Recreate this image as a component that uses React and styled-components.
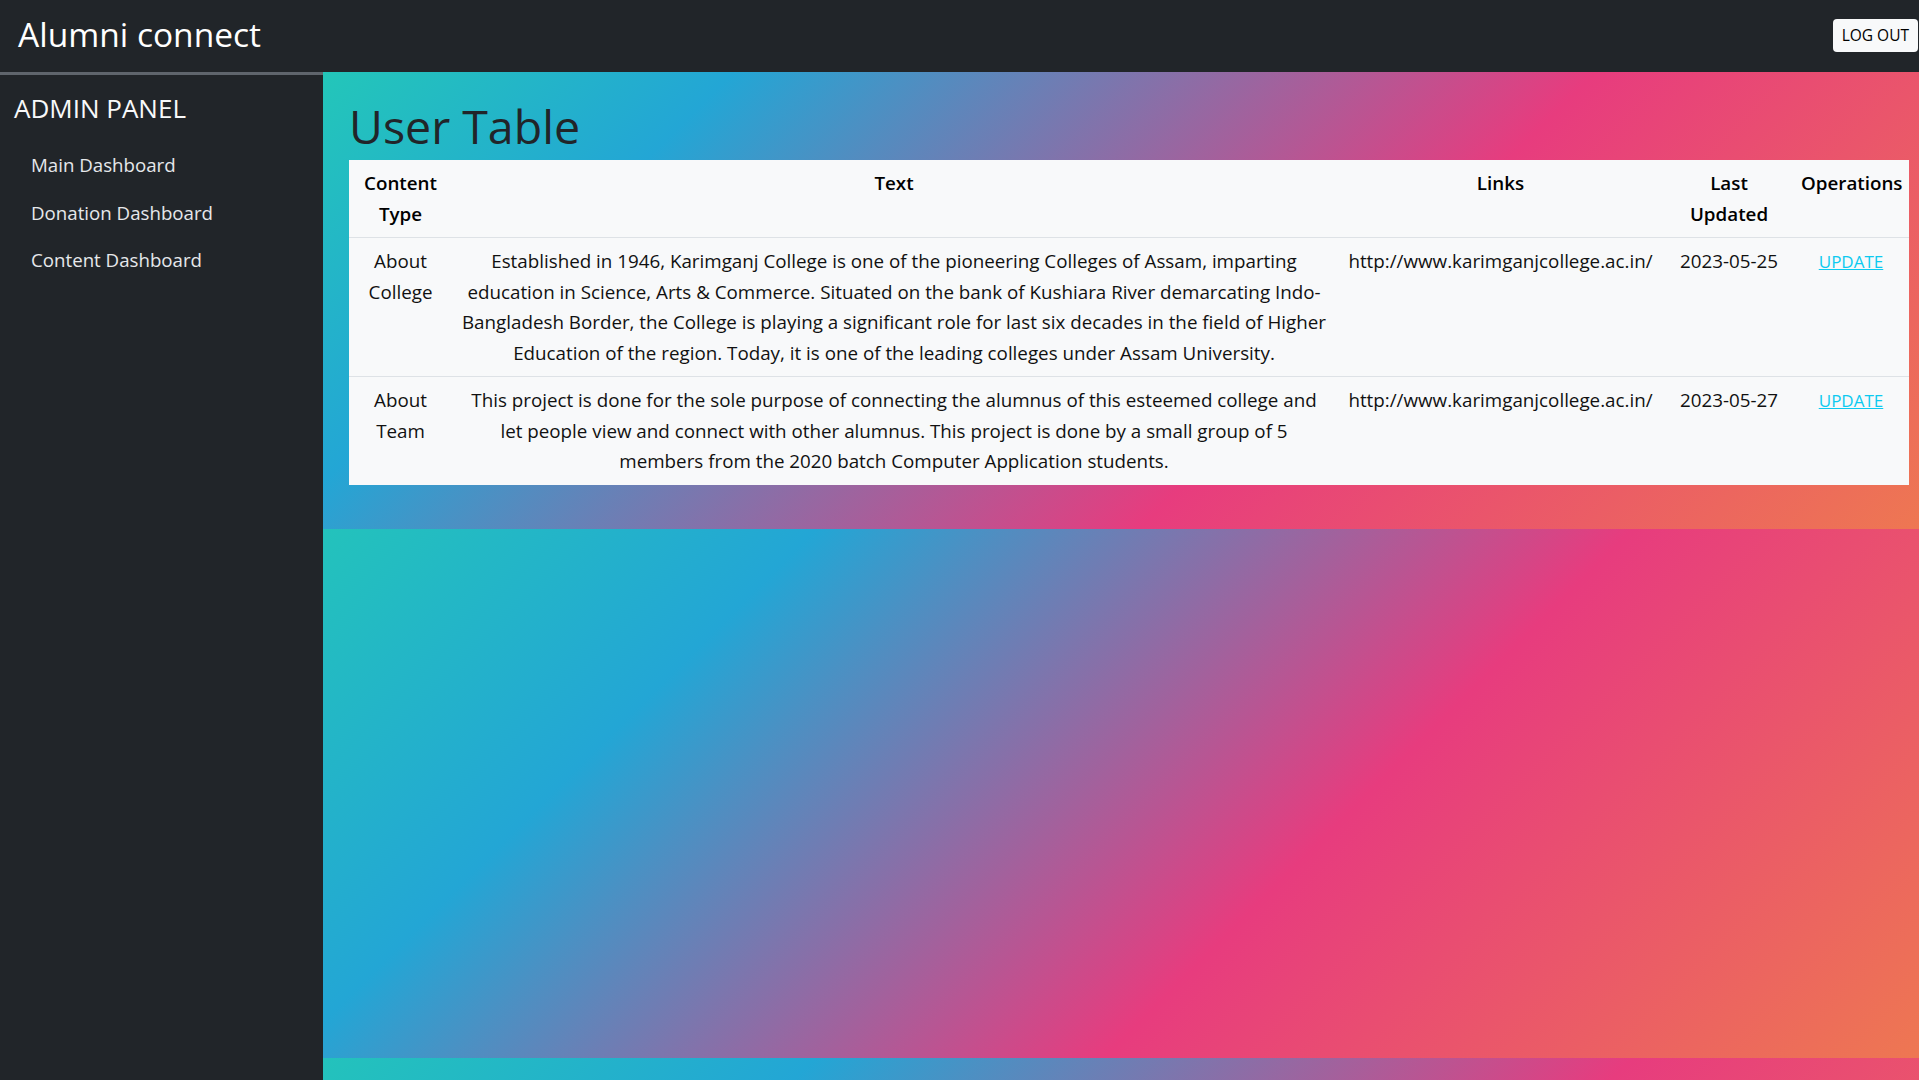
import React from 'react';
import styled, { createGlobalStyle } from 'styled-components';

const pageGradient = 'linear-gradient(-45deg, #ee7752, #e73c7e, #23a6d5, #23d5ab)';
const sectionGradient = 'linear-gradient(135deg, #23c6b9 0%, #23a6d5 20%, #e73c7e 62%, #ee7752 100%)';

const GlobalStyle = createGlobalStyle`
	html, body {
		margin: 0;
		padding: 0;
	}
	body {
		font-family: "Open Sans", "Noto Sans", sans-serif;
		background: ${pageGradient};
		background-size: 100% 529px;
		background-repeat: repeat;
		color: #212529;
		overflow: hidden;
	}
	* {
		box-sizing: border-box;
	}
`;

const colors = {
	dark: '#212529',
	light: '#f8f9fa',
	border: '#dee2e6',
	rule: '#5f656c',
	link: '#0dcaf0',
};

const TopBar = styled.header`
	display: flex;
	align-items: center;
	justify-content: space-between;
	height: 72px;
	padding: 0 1px 0 18px;
	background: ${colors.dark};
`;
const Brand = styled.div`
	color: #fff;
	font-size: 33.5px;
	line-height: 1;
	padding-bottom: 2px;
`;
const LogoutButton = styled.button`
	height: 33px;
	padding: 0 9px;
	border: none;
	border-radius: 4px;
	background: ${colors.light};
	color: #000;
	font-family: inherit;
	font-size: 15.5px;
	margin-bottom: 2px;
	cursor: pointer;
`;

const Body = styled.div`
	display: flex;
	height: calc(100vh - 72px);
`;

const Sidebar = styled.aside`
	width: 323px;
	flex-shrink: 0;
	background: ${colors.dark};
	border-top: 3px solid ${colors.rule};
	padding: 18px 0 0 14px;
`;
const PanelTitle = styled.h2`
	margin: 0 0 17px;
	color: ${colors.light};
	font-size: 26px;
	font-weight: 400;
	line-height: 31px;
`;
const NavList = styled.nav`
	display: flex;
	flex-direction: column;
`;
const NavItem = styled.a`
	display: block;
	padding: 10px 17px;
	color: #e6e8eb;
	font-size: 18.7px;
	line-height: 27.5px;
	text-decoration: none;
	cursor: pointer;
`;

const Main = styled.main`
	flex: 1;
	min-width: 0;
`;
const Section = styled.section`
	min-height: 457px;
	background: ${sectionGradient};
	padding: 27px 10px 27px 26px;
`;
const Title = styled.h1`
	margin: 0 0 6px;
	font-size: 46.5px;
	font-weight: 500;
	line-height: 55px;
	color: ${colors.dark};
`;

const Table = styled.table`
	width: 100%;
	table-layout: fixed;
	border-collapse: collapse;
	background: ${colors.light};
	margin-bottom: 16px;
	font-size: 18.8px;
	line-height: 30.5px;
	color: #111;
`;
const Th = styled.th`
	padding: 8px;
	font-weight: 600;
	text-align: center;
	vertical-align: top;
	white-space: ${p => (p.$nowrap ? 'nowrap' : 'normal')};
	border-bottom: 1px solid ${colors.border};
	color: #000;
`;
const Td = styled.td`
	padding: 8px;
	text-align: center;
	vertical-align: top;
	border-bottom: ${p => (p.$last ? 'none' : `1px solid ${colors.border}`)};
`;
const UpdateLink = styled.a`
	color: ${colors.link};
	font-size: 17px;
	text-decoration: underline;
	cursor: pointer;
`;

const columns = [
	{ label: 'Content Type', width: 103 },
	{ label: 'Text', width: 884 },
	{ label: 'Links', width: 329 },
	{ label: 'Last Updated', width: 128 },
	{ label: 'Operations', width: 116, nowrap: true },
];

const rows = [
	{
		id: 1,
		type: 'About College',
		text: 'Established in 1946, Karimganj College is one of the pioneering Colleges of Assam, imparting education in Science, Arts & Commerce. Situated on the bank of Kushiara River demarcating Indo-Bangladesh Border, the College is playing a significant role for last six decades in the field of Higher Education of the region. Today, it is one of the leading colleges under Assam University.',
		link: 'http://www.karimganjcollege.ac.in/',
		date: '2023-05-25',
	},
	{
		id: 2,
		type: 'About Team',
		text: 'This project is done for the sole purpose of connecting the alumnus of this esteemed college and let people view and connect with other alumnus. This project is done by a small group of 5 members from the 2020 batch Computer Application students.',
		link: 'http://www.karimganjcollege.ac.in/',
		date: '2023-05-27',
	},
];

const navItems = ['Main Dashboard', 'Donation Dashboard', 'Content Dashboard'];

const App = () => {
	return (
		<>
			<GlobalStyle />
			<TopBar>
				<Brand>Alumni connect</Brand>
				<LogoutButton>LOG OUT</LogoutButton>
			</TopBar>
			<Body>
				<Sidebar>
					<PanelTitle>ADMIN PANEL</PanelTitle>
					<NavList>
						{navItems.map(item => <NavItem key={item}>{item}</NavItem>)}
					</NavList>
				</Sidebar>
				<Main>
					<Section>
						<Title>User Table</Title>
						<Table>
							<colgroup>
								{columns.map(col => <col key={col.label} style={{ width: col.width }} />)}
							</colgroup>
							<thead>
								<tr>
									{columns.map(col => <Th key={col.label} $nowrap={col.nowrap}>{col.label}</Th>)}
								</tr>
							</thead>
							<tbody>
								{rows.map((row, i) => {
									const last = i === rows.length - 1;
									return (
										<tr key={row.id}>
											<Td $last={last}>{row.type}</Td>
											<Td $last={last}>{row.text}</Td>
											<Td $last={last}>{row.link}</Td>
											<Td $last={last}>{row.date}</Td>
											<Td $last={last}><UpdateLink>UPDATE</UpdateLink></Td>
										</tr>
									);
								})}
							</tbody>
						</Table>
					</Section>
				</Main>
			</Body>
		</>
	);
};

export default App;
